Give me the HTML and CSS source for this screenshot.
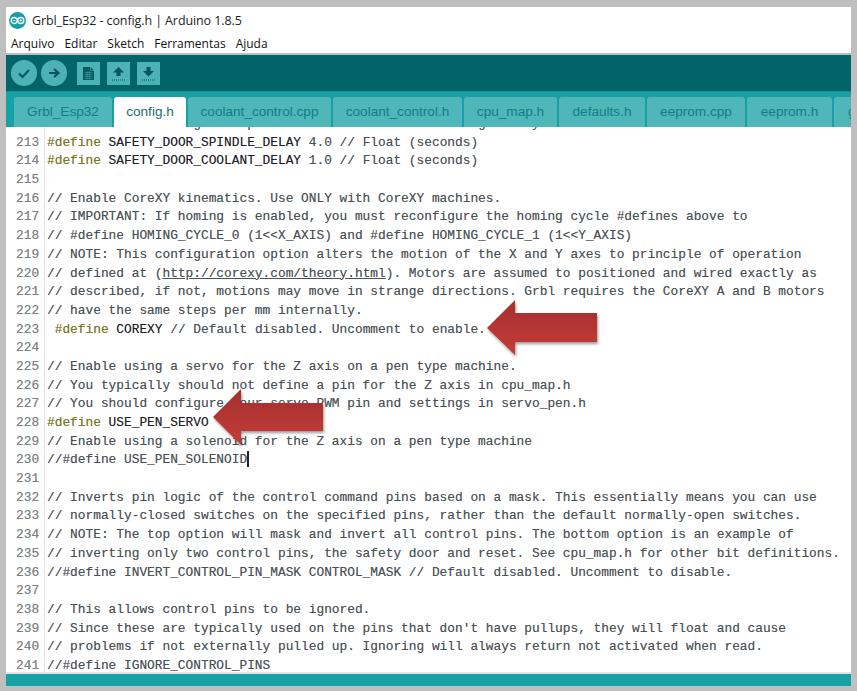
FILE: index.html
```html
<!DOCTYPE html>
<html lang="pt">
<head>
<meta charset="utf-8">
<title>Grbl_Esp32 - config.h | Arduino 1.8.5</title>
<link rel="stylesheet" href="styles.css">
</head>
<body>
<div class="window">
  <div class="titlebar">
    <svg class="logo" width="17" height="17" viewBox="0 0 17 17"><circle cx="8.5" cy="8.5" r="8.5" fill="#1a9ea3"/><circle cx="5.2" cy="8.5" r="3" fill="none" stroke="#fff" stroke-width="1.3"/><circle cx="11.8" cy="8.5" r="3" fill="none" stroke="#fff" stroke-width="1.3"/><path d="M3.9 8.5h2.6M10.5 8.5h2.6M11.8 7.2v2.6" stroke="#fff" stroke-width=".8"/></svg>
    <span>Grbl_Esp32 - config.h | Arduino 1.8.5</span>
  </div>
  <nav class="menubar"><span>Arquivo</span><span>Editar</span><span>Sketch</span><span>Ferramentas</span><span>Ajuda</span></nav>
  <div class="toolbar">
    <svg class="round" viewBox="0 0 26 26"><circle cx="13" cy="13" r="13" fill="#4db2b6"/><path d="M8 13.500l3.500 3.500 6.500-7" fill="none" stroke="#00595d" stroke-width="2.2"/></svg>
    <svg class="round" viewBox="0 0 26 26"><circle cx="13" cy="13" r="13" fill="#4db2b6"/><path d="M8 13h9M13 9l4.500 4-4.500 4" fill="none" stroke="#00595d" stroke-width="2.2"/></svg>
    <svg class="square first" viewBox="0 0 23 23"><rect width="23" height="23" fill="#4db2b6"/><path d="M6 5h7.500l3.500 3.500V18H6z" fill="#00595d"/><path d="M13.500 5v3.500H17" fill="none" stroke="#4db2b6" stroke-width=".6"/><path d="M7.500 10.500h8M7.500 12.500h8M7.500 14.500h8M7.500 16.500h8M10 9.500v8M12.500 9.500v8" stroke="#4db2b6" stroke-width=".5"/></svg>
    <svg class="square" viewBox="0 0 23 23"><rect width="23" height="23" fill="#4db2b6"/><path d="M11.500 5l5.500 5.500h-3.500v3.500h-4v-3.500H6z" fill="#00595d"/><path d="M5 18h13" stroke="#00595d" stroke-dasharray="1 1"/></svg>
    <svg class="square" viewBox="0 0 23 23"><rect width="23" height="23" fill="#4db2b6"/><path d="M11.500 14.500l5.500-5.500h-3.500V5h-4v4H6z" fill="#00595d"/><path d="M5 18h13" stroke="#00595d" stroke-dasharray="1 1"/></svg>
  </div>
  <div class="tabs">
    <span class="tab t1">Grbl_Esp32</span>
    <span class="tab t2 active">config.h</span>
    <span class="tab t3">coolant_control.cpp</span>
    <span class="tab t4">coolant_control.h</span>
    <span class="tab t5">cpu_map.h</span>
    <span class="tab t6">defaults.h</span>
    <span class="tab t7">eeprom.cpp</span>
    <span class="tab t8">eeprom.h</span>
    <span class="tab t9">g</span>
  </div>
  <main class="editor">
    <div class="code">
      <div class="ln"><b>212</b><code>// between restoring the spindle and coolant and resuming the cycle.</code></div>
      <div class="ln"><b>213</b><code><i>#define</i> <em>SAFETY_DOOR_SPINDLE_DELAY</em> 4.0 // Float (seconds)</code></div>
      <div class="ln"><b>214</b><code><i>#define</i> <em>SAFETY_DOOR_COOLANT_DELAY</em> 1.0 // Float (seconds)</code></div>
      <div class="ln"><b>215</b><code></code></div>
      <div class="ln"><b>216</b><code>// Enable CoreXY kinematics. Use ONLY with CoreXY machines.</code></div>
      <div class="ln"><b>217</b><code>// IMPORTANT: If homing is enabled, you must reconfigure the homing cycle #defines above to</code></div>
      <div class="ln"><b>218</b><code>// #define HOMING_CYCLE_0 (1&lt;&lt;X_AXIS) and #define HOMING_CYCLE_1 (1&lt;&lt;Y_AXIS)</code></div>
      <div class="ln"><b>219</b><code>// NOTE: This configuration option alters the motion of the X and Y axes to principle of operation</code></div>
      <div class="ln"><b>220</b><code>// defined at (<u>http://corexy.com/theory.html</u>). Motors are assumed to positioned and wired exactly as</code></div>
      <div class="ln"><b>221</b><code>// described, if not, motions may move in strange directions. Grbl requires the CoreXY A and B motors</code></div>
      <div class="ln"><b>222</b><code>// have the same steps per mm internally.</code></div>
      <div class="ln"><b>223</b><code> <i>#define</i> <em>COREXY</em> // Default disabled. Uncomment to enable.</code></div>
      <div class="ln"><b>224</b><code></code></div>
      <div class="ln"><b>225</b><code>// Enable using a servo for the Z axis on a pen type machine.</code></div>
      <div class="ln"><b>226</b><code>// You typically should not define a pin for the Z axis in cpu_map.h</code></div>
      <div class="ln"><b>227</b><code>// You should configure your servo PWM pin and settings in servo_pen.h</code></div>
      <div class="ln"><b>228</b><code><i>#define</i> <em>USE_PEN_SERVO</em></code></div>
      <div class="ln"><b>229</b><code>// Enable using a solenoid for the Z axis on a pen type machine</code></div>
      <div class="ln"><b>230</b><code>//#define USE_PEN_SOLENOID<span class="caret"></span></code></div>
      <div class="ln"><b>231</b><code></code></div>
      <div class="ln"><b>232</b><code>// Inverts pin logic of the control command pins based on a mask. This essentially means you can use</code></div>
      <div class="ln"><b>233</b><code>// normally-closed switches on the specified pins, rather than the default normally-open switches.</code></div>
      <div class="ln"><b>234</b><code>// NOTE: The top option will mask and invert all control pins. The bottom option is an example of</code></div>
      <div class="ln"><b>235</b><code>// inverting only two control pins, the safety door and reset. See cpu_map.h for other bit definitions.</code></div>
      <div class="ln"><b>236</b><code>//#define INVERT_CONTROL_PIN_MASK CONTROL_MASK // Default disabled. Uncomment to disable.</code></div>
      <div class="ln"><b>237</b><code></code></div>
      <div class="ln"><b>238</b><code>// This allows control pins to be ignored.</code></div>
      <div class="ln"><b>239</b><code>// Since these are typically used on the pins that don't have pullups, they will float and cause</code></div>
      <div class="ln"><b>240</b><code>// problems if not externally pulled up. Ignoring will always return not activated when read.</code></div>
      <div class="ln"><b>241</b><code>//#define IGNORE_CONTROL_PINS</code></div>
    </div>
  </main>
  <div class="status"></div>
</div>
<svg class="arrows" width="857" height="691" viewBox="0 0 857 691">
  <defs>
    <linearGradient id="red" x1="0" y1="0" x2="0" y2="1"><stop offset="0" stop-color="#a32f2d"/><stop offset="1" stop-color="#c63c39"/></linearGradient>
    <filter id="sh" x="-20%" y="-20%" width="140%" height="150%"><feDropShadow dx="1" dy="2" stdDeviation="1.500" flood-color="#000" flood-opacity=".4"/></filter>
  </defs>
  <path d="M487 328L515 300V313H597V342H515V355Z" fill="url(#red)" filter="url(#sh)"/>
  <path d="M213 417L241 389V403H323V431H241V445Z" fill="url(#red)" filter="url(#sh)"/>
</svg>
</body>
</html>
```
FILE: styles.css
```css
* { box-sizing: border-box; }
html, body { margin: 0; height: 100%; }
body { position: relative; width: 857px; height: 691px; background: #bfbfbf; overflow: hidden; padding: 7px 6px 5px 6px; }
.window { height: 679px; background: #fff; display: flex; flex-direction: column; overflow: hidden; font-family: "Liberation Sans", Arial, sans-serif; }
.titlebar { height: 26px; display: flex; align-items: center; gap: 6px; padding: 0 0 0 3px; font-family: "Open Sans", "Noto Sans", sans-serif; font-size: 12.5px; letter-spacing: -.1px; color: #222; flex: none; }
.logo { flex: none; }
.menubar { height: 20px; display: flex; gap: 10px; padding: 0 0 0 5px; align-items: center; font-family: "Open Sans", "Noto Sans", sans-serif; font-size: 12px; color: #111; flex: none; }
.toolbar { height: 38px; background: #006468; border-top: 2px solid #bdbdbd; display: flex; align-items: center; padding: 0 0 0 5px; gap: 4px; flex: none; }
.round { width: 26px; height: 26px; }
.square { width: 23px; height: 23px; margin-left: 3px; }
.square.first { margin-left: 6px; }
.tabs { height: 36px; background: #17a1a5; display: flex; align-items: flex-end; padding: 0 0 0 8px; gap: 2px; flex: none; overflow: hidden; border-top: 1px solid #128f93; }
.tab { height: 30px; padding-bottom: 2px; background: #4fb6ba; color: #0e7f84; border-radius: 3px 3px 0 0; font-size: 13.6px; display: flex; align-items: center; justify-content: center; flex: none; }
.tab.active { background: #fff; color: #1b6e72; }
.t1 { width: 98px; } .t2 { width: 72px; } .t3 { width: 143px; } .t4 { width: 129px; } .t5 { width: 93px; } .t6 { width: 86px; } .t7 { width: 98px; } .t8 { width: 85px; } .t9 { width: 40px; justify-content: flex-start; padding-left: 14px; }
.editor { flex: 1; min-height: 0; overflow: hidden; background: #fff; border-bottom: 2px solid #e4e4e4; }
.code { margin-top: -12px; font-family: "Liberation Mono", "Courier New", monospace; font-size: 12.83px; line-height: 18.7px; color: #4b5256; text-shadow: 0 0 .6px rgba(60,70,75,.5); }
.ln { display: flex; height: 18.7px; white-space: pre; }
.ln b { flex: none; width: 39px; padding-left: 10px; margin-right: 2px; border-right: 1px solid #e2e2e2; font-weight: normal; color: #7d8487; text-align: left; }
.ln code { font: inherit; }
.ln i { font-style: normal; color: #7b7a16; }
.ln em { font-style: normal; color: #1d2226; }
.caret { display: inline-block; width: 2px; height: 16px; background: #222; vertical-align: -4px; margin-right: -2px; }
.status { height: 12px; background: #17a1a5; flex: none; }
.arrows { position: absolute; left: 0; top: 0; pointer-events: none; }
```
